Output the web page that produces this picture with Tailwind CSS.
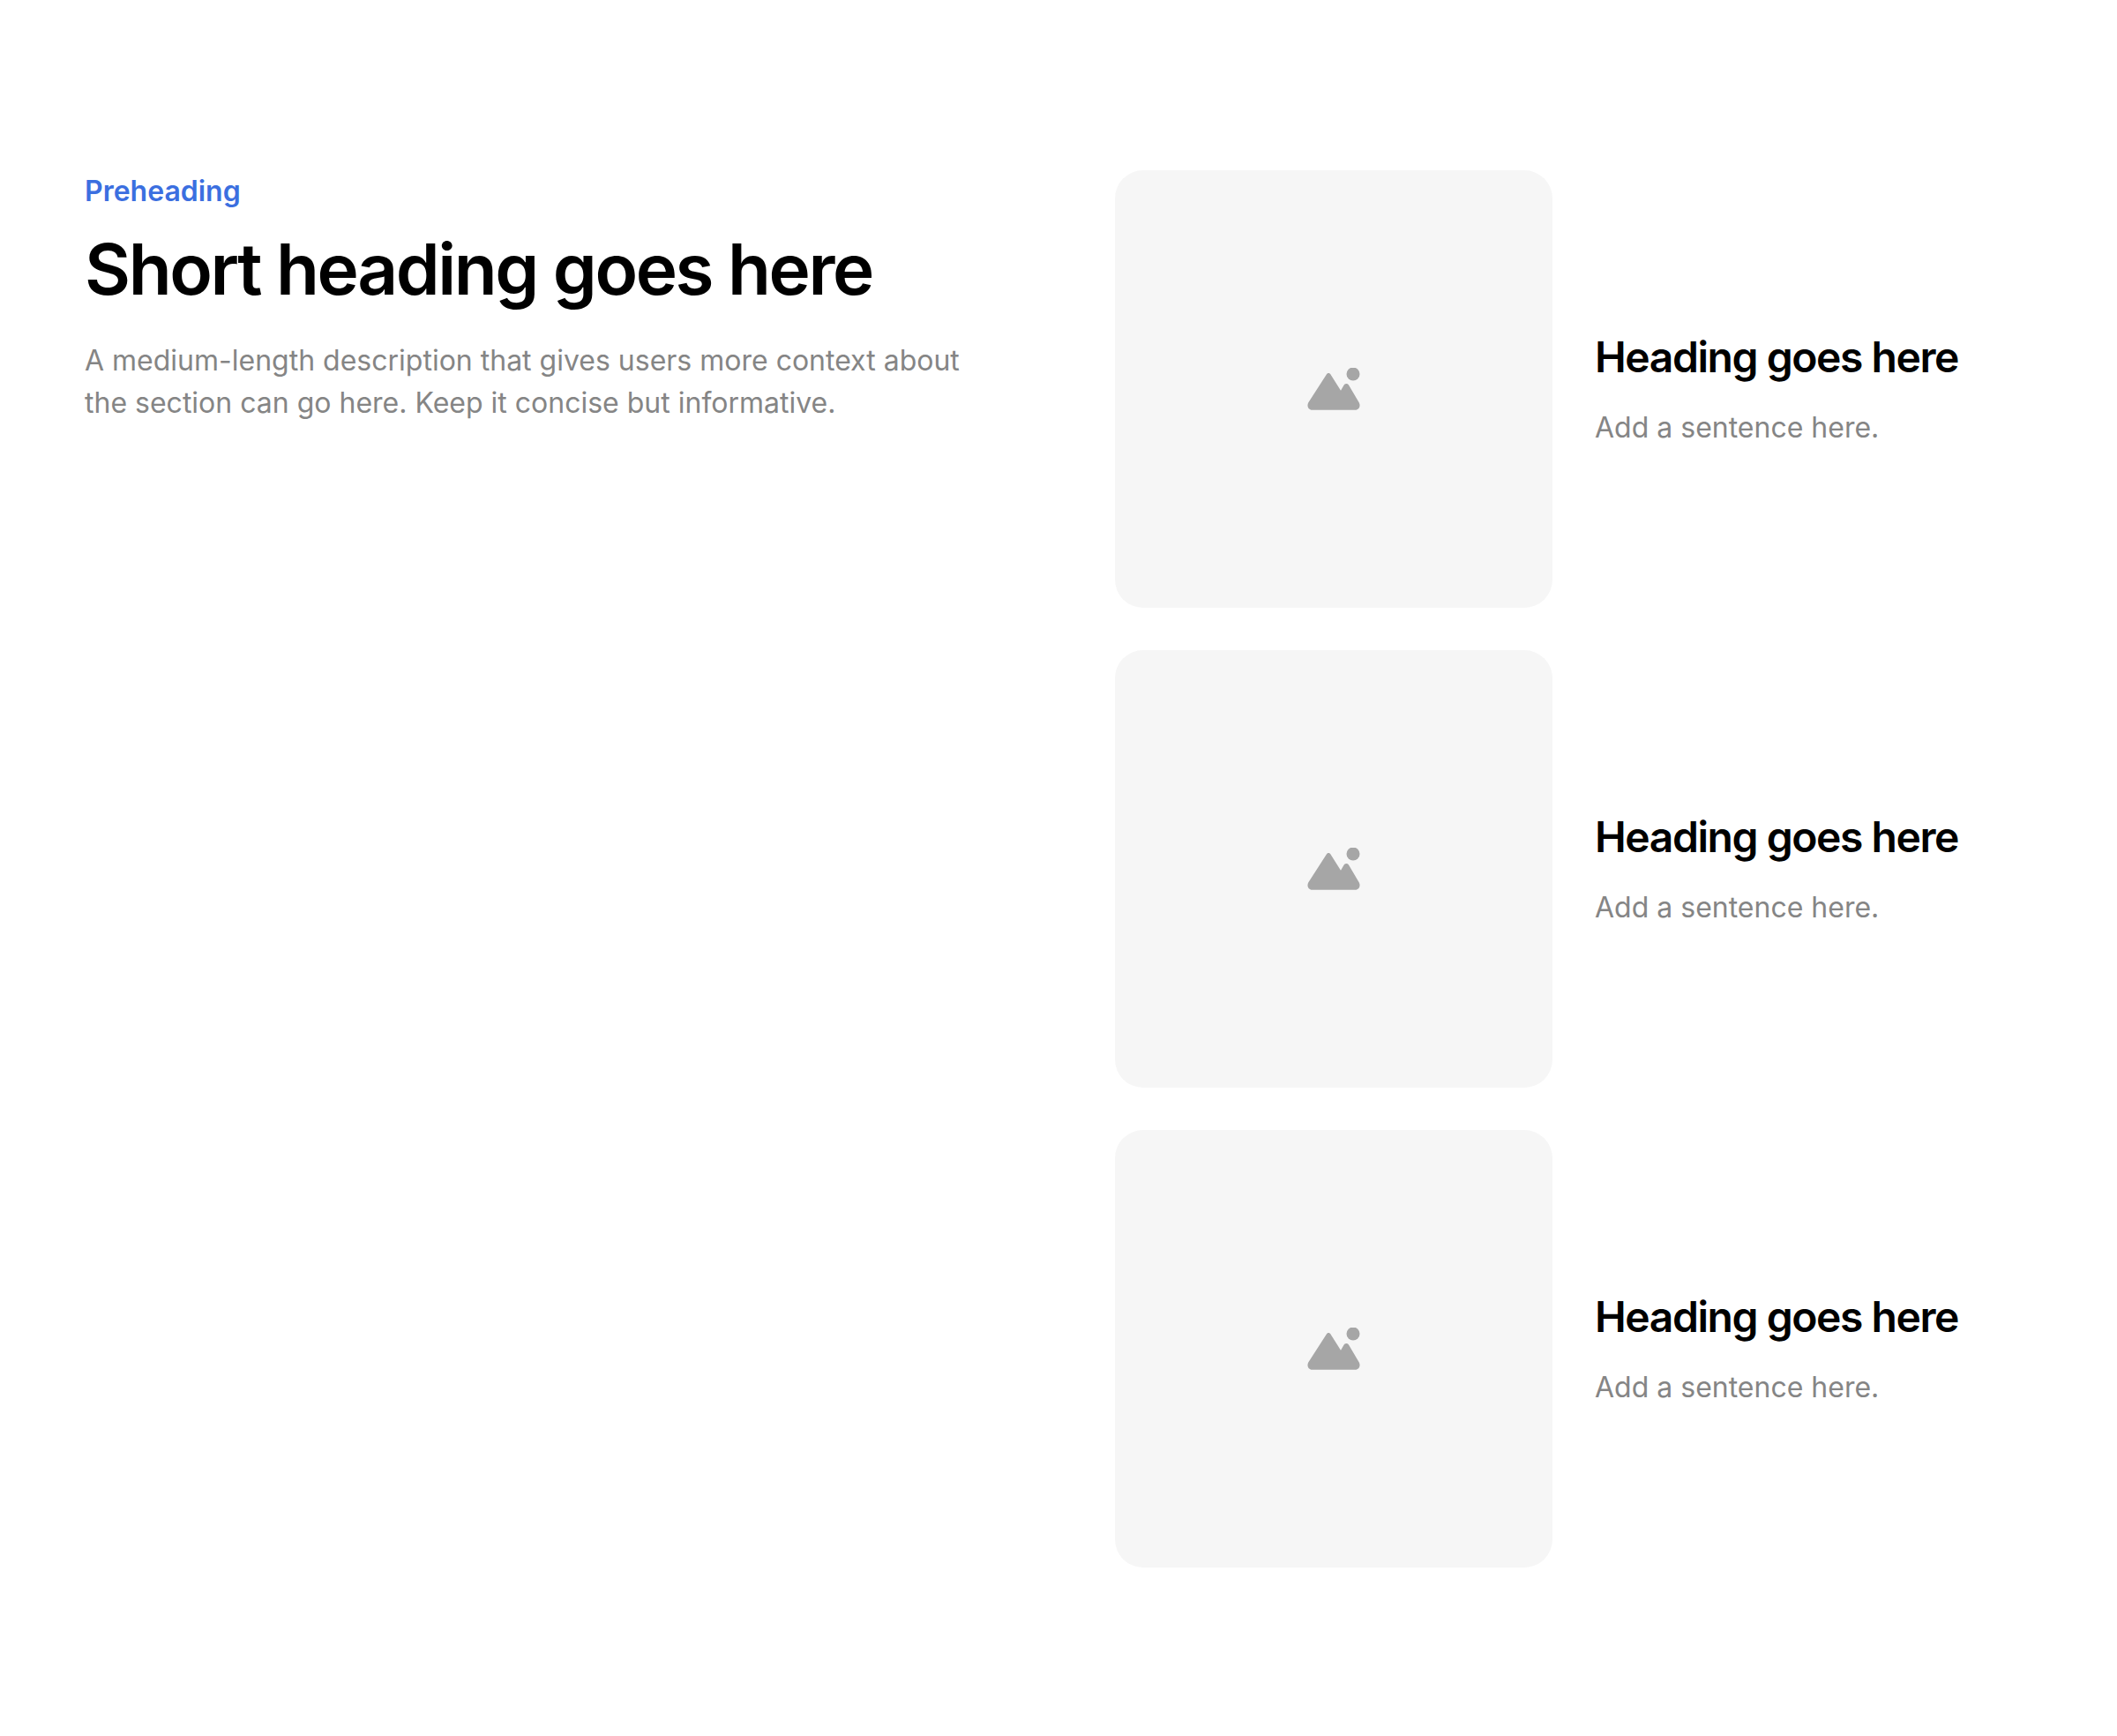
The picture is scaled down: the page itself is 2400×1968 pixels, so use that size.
<!DOCTYPE html>
<html lang="en">
<head>
    <meta charset="UTF-8">
    <meta name="viewport" content="width=device-width, initial-scale=1.0">
    <title>Section</title>
    <script src="https://cdn.jsdelivr.net/npm/@tailwindcss/browser@4"></script>
</head>
<body class="bg-white font-['Inter',sans-serif]">
    <section class="grid grid-cols-2 gap-32 px-24 pt-[193px] pb-48">
        <div>
            <p class="mb-4 text-[32px] leading-[48px] font-semibold text-[#3B6FE0]">Preheading</p>
            <h1 class="mb-8 text-[80px] leading-[96px] font-semibold tracking-[-0.03em] text-black">Short heading goes here</h1>
            <p class="text-[32px] leading-[48px] text-[#858585]">A medium-length description that gives users more context about the section can go here. Keep it concise but informative.</p>
        </div>
        <div class="flex flex-col gap-12">
            <div class="flex items-center gap-12">
                <div class="flex h-[496px] w-[496px] shrink-0 items-center justify-center rounded-[32px] bg-[#F6F6F6]">
                    <svg class="h-[48px] w-[60px]" viewBox="0 0 60 48" fill="#A6A6A6"><circle cx="52" cy="7" r="7.500"/><path d="M21.500 8C23 5.400 25.300 5.400 26.800 8L38 25.700L41.300 20C42.800 17.400 45.800 17.400 47.300 20L58.800 39.500C60.800 43.300 58.500 47.700 54.500 47.700H5.500C1.500 47.700-.8 43.300 1.200 39.500Z"/></svg>
                </div>
                <div class="flex-1">
                    <h2 class="mb-6 text-[48px] leading-[64px] font-semibold tracking-[-0.03em] text-black">Heading goes here</h2>
                    <p class="text-[32px] leading-[48px] text-[#858585]">Add a sentence here.</p>
                </div>
            </div>
            <div class="flex items-center gap-12">
                <div class="flex h-[496px] w-[496px] shrink-0 items-center justify-center rounded-[32px] bg-[#F6F6F6]">
                    <svg class="h-[48px] w-[60px]" viewBox="0 0 60 48" fill="#A6A6A6"><circle cx="52" cy="7" r="7.500"/><path d="M21.500 8C23 5.400 25.300 5.400 26.800 8L38 25.700L41.300 20C42.800 17.400 45.800 17.400 47.300 20L58.800 39.500C60.800 43.300 58.500 47.700 54.500 47.700H5.500C1.500 47.700-.8 43.300 1.200 39.500Z"/></svg>
                </div>
                <div class="flex-1">
                    <h2 class="mb-6 text-[48px] leading-[64px] font-semibold tracking-[-0.03em] text-black">Heading goes here</h2>
                    <p class="text-[32px] leading-[48px] text-[#858585]">Add a sentence here.</p>
                </div>
            </div>
            <div class="flex items-center gap-12">
                <div class="flex h-[496px] w-[496px] shrink-0 items-center justify-center rounded-[32px] bg-[#F6F6F6]">
                    <svg class="h-[48px] w-[60px]" viewBox="0 0 60 48" fill="#A6A6A6"><circle cx="52" cy="7" r="7.500"/><path d="M21.500 8C23 5.400 25.300 5.400 26.800 8L38 25.700L41.300 20C42.800 17.400 45.800 17.400 47.300 20L58.800 39.500C60.800 43.300 58.500 47.700 54.500 47.700H5.500C1.500 47.700-.8 43.300 1.200 39.500Z"/></svg>
                </div>
                <div class="flex-1">
                    <h2 class="mb-6 text-[48px] leading-[64px] font-semibold tracking-[-0.03em] text-black">Heading goes here</h2>
                    <p class="text-[32px] leading-[48px] text-[#858585]">Add a sentence here.</p>
                </div>
            </div>
        </div>
    </section>
</body>
</html>
